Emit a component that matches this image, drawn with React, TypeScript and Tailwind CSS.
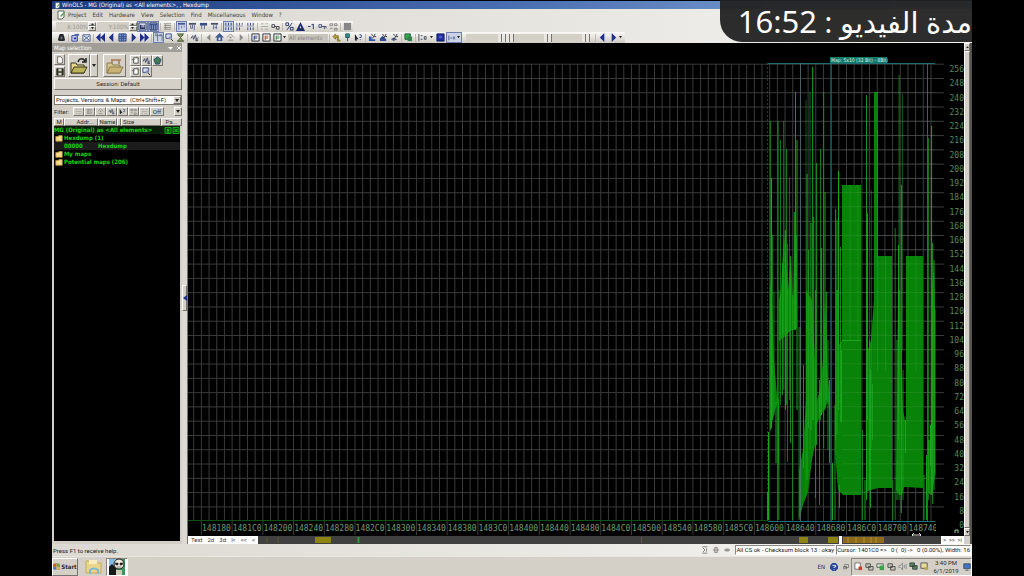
import React from 'react';
import clsx from 'clsx';

type Shape = { d: string; fill?: string; stroke?: string };

const NAVY = '#1c2f8c';
const INK = '#22262e';
const GREY = '#8d8b86';

const icons: Record<string, Shape[]> = {
    doc: [
        { d: 'M2 1h6v6l-2 2H2z', fill: '#fff', stroke: '#5a6a5a' },
        { d: 'M4 6l4-4 1 1-4 4z', fill: '#4f9a5a' },
    ],
    bear: [{ d: 'M3 1h4l1 3 1 4-2 1H3L1 8l1-4z', fill: INK }, { d: 'M4 4h2v3H4z', fill: '#777' }],
    windows: [
        { d: 'M1 3h6v6H1z', fill: '#dfe6f6', stroke: NAVY },
        { d: 'M4 1h5v2H4z', fill: '#4a63b4' },
        { d: 'M3 5h3v2H3z', fill: NAVY },
    ],
    windowX: [
        { d: 'M1 2h8v7H1z', fill: '#e8ecf4', stroke: '#46568a' },
        { d: 'M2 3l6 5M8 3L2 8', stroke: '#30508a' },
    ],
    rewind: [{ d: 'M5 0v10L0 5zM10 0v10L5 5z', fill: NAVY }],
    back: [{ d: 'M7 0v10L2 5z', fill: NAVY }],
    grid: [
        { d: 'M1 1h8v8H1z', fill: '#7f97cf', stroke: '#2a3d78' },
        { d: 'M1 4h8M1 6h8M4 1v8M6 1v8', stroke: '#33508f' },
    ],
    forward: [{ d: 'M3 0v10l5-5z', fill: NAVY }],
    fastForward: [{ d: 'M0 0v10l5-5zM5 0v10l5-5z', fill: NAVY }],
    columns: [{ d: 'M1 1h3v8M6 2h3v7M1 3h8', stroke: '#5d6d8b' }],
    search: [
        { d: 'M1 1h6v5H1z', fill: '#d8dff0', stroke: '#34467e' },
        { d: 'M5 5l4 4', stroke: INK },
        { d: 'M4 4h3v3H4z', fill: '#8896b8' },
    ],
    hourglass: [
        { d: 'M1 1h8M1 9h8', stroke: '#44612c' },
        { d: 'M2 2h6L5 5l3 4H2l3-4z', fill: '#98a860', stroke: '#48583a' },
    ],
    wave: [{ d: 'M1 6l2-3 1 4 2-5 1 5 2-2', stroke: '#39445f' }, { d: 'M6 7h3v2H6z', fill: '#525d78' }],
    backGrey: [{ d: 'M7 1v8L3 5z', fill: GREY }],
    forwardGrey: [{ d: 'M3 1v8l4-4z', fill: GREY }],
    roof: [{ d: 'M0 5l5-5 5 5-2 0v4H2V5z', fill: '#3f5990' }, { d: 'M4 5h2v3H4z', fill: '#e8ecf6' }],
    roofGrey: [{ d: 'M1 5l4-4 4 4M2 8h6', stroke: GREY }, { d: 'M4 4h2v2H4z', fill: GREY }],
    flagBlue: [{ d: 'M1 1h8v8H1z', fill: '#f4f4f4', stroke: INK }, { d: 'M3 3h4v1H4v1h3v1H4v2H3z', fill: NAVY }],
    flagRed: [{ d: 'M1 1h8v8H1z', fill: '#f4f4f4', stroke: INK }, { d: 'M3 3h4v1H4v1h3v1H4v2H3z', fill: '#a04a28' }],
    flagGreen: [{ d: 'M1 1h8v8H1z', fill: '#f4f4f4', stroke: INK }, { d: 'M3 3h4v1H4v1h3v1H4v2H3z', fill: '#2c8a38' }],
    undo: [{ d: 'M1 4l3-3v2h3v5h2v1H6V5H4v2z', fill: '#b49c34', stroke: '#8c7a2e' }],
    pin: [{ d: 'M3 1h4v4H3z', fill: '#2f9a94', stroke: '#1e4a5a' }, { d: 'M5 5v4', stroke: '#28405c' }],
    help: [{ d: 'M1 1l4 6H3v2L1 8z', fill: INK }, { d: 'M6 2h2v3H6M7 7v1', stroke: '#2d4b80' }],
    wand: [{ d: 'M1 4h3v3h4v2H1z', fill: '#2f56a8' }, { d: 'M4 1l1 2M8 1L5 6M9 4H7', stroke: INK }],
    wandFill: [{ d: 'M1 6l3-3 4 4v2H1z', fill: '#314f92' }, { d: 'M4 1l1 2M8 1L5 6M9 4H7', stroke: INK }],
    wandEye: [{ d: 'M1 7l3-2 4 2-4 2z', fill: '#4a5a80' }, { d: 'M4 1l1 2M8 1L5 6M9 4H7', stroke: INK }],
    layers: [{ d: 'M1 1h6v6H1z', fill: '#2fae4d', stroke: '#264f3c' }, { d: 'M4 4h5v5H4z', fill: '#32804a' }],
    number: [{ d: 'M1 1v8M3 3h2M3 7h2M7 4h2v3H7z', stroke: '#3f4a60' }],
    solid: [{ d: 'M1 1h8v8H1z', fill: '#1e2b9c', stroke: '#131c60' }, { d: 'M3 3h4v3H3z', fill: '#4657c8' }],
    bars: [{ d: 'M1 2v6M3 5h2M6 4h3M6 6h3', stroke: '#3a4c88' }],
    mapView: [{ d: 'M1 1h8v8H1z', fill: '#eef0f8', stroke: '#25335c' }, { d: 'M2 3h2v3h1V3h1v3h1V3h1v5H2z', fill: '#25335c' }],
    table: [{ d: 'M1 1h8v8H1z', fill: '#91a5d8', stroke: '#25335c' }, { d: 'M1 3h8M3 3v6M5 3v6M7 3v6', stroke: '#2d3d80' }],
    lines: [{ d: 'M1 2h8M1 4h8M1 6h8M1 8h8', stroke: GREY }, { d: 'M3 2v6', stroke: GREY }],
    bitA: [{ d: 'M1 1h8v2H1z', fill: '#4159a5' }, { d: 'M2 3v6M5 4v3M8 4v2', stroke: '#6e82b8' }],
    bitB: [{ d: 'M1 1h8v2H1z', fill: '#4a5267' }, { d: 'M3 3v4h2V3M7 3v6', stroke: '#56678f' }],
    bitC: [{ d: 'M1 1h8v3H1z', fill: '#3c4f85' }, { d: 'M3 4v4M6 4v4', stroke: '#56678f' }],
    bitD: [{ d: 'M1 1h8v2H1z', fill: '#4a5267' }, { d: 'M4 3v5M7 3v5M5 6h3', stroke: '#56678f' }],
    binA: [{ d: 'M2 1v3M5 1v3M8 1v3M2 6v3M5 6v3M8 6v3', stroke: '#2c4078' }, { d: 'M1 4h8v1H1z', fill: '#8796bb' }],
    binB: [{ d: 'M2 1v3M5 1v3M2 6v3M5 6v3M8 1v2', stroke: '#364a78' }, { d: 'M1 4h8v1H1z', fill: '#8796bb' }],
    dots: [{ d: 'M1 2h3M6 2h3M1 5h8M1 8h2M5 8h4', stroke: '#a8a59e' }],
    link: [{ d: 'M1 3h3v3H1zM6 5h3v3H6zM4 5h2', stroke: '#3d4049' }],
    percent: [{ d: 'M1 1h3v3H1zM6 6h3v3H6zM8 1L2 9', stroke: '#1f2f68' }],
    delta: [{ d: 'M5 0l5 10H0zM5 4L4 7h2z', fill: '#1d2d6c' }],
    minusOne: [{ d: 'M1 5h3M7 2v6M5 3h2', stroke: '#1f2f68' }],
    key: [{ d: 'M1 3h3v3H1zM4 5h5M7 5v3M9 5v2', stroke: '#3d4a6c' }],
    tree: [{ d: 'M1 2h3v2H1zM6 2h3v2H6zM1 7h3M6 7h3v2H6z', stroke: '#85827b' }],
    square: [{ d: 'M1 1h8v8H1z', fill: '#868686' }],
    page: [{ d: 'M2 1h4l2 2v6H2z', fill: '#fff', stroke: '#57544e' }],
    pageAdd: [{ d: 'M3 2h5v6H3z', fill: '#fff', stroke: '#4a4a4a' }, { d: 'M1 4h3M6 1l3 2', stroke: '#6a7060' }],
    disk: [{ d: 'M1 1h8v8H1z', fill: '#343a24', stroke: '#1a1a1a' }, { d: 'M3 1h4v3H3zM3 6h4v3H3z', fill: '#d0d0c4' }],
    gem: [{ d: 'M5 1l4 3-2 5H3L1 4z', fill: '#3d7b50', stroke: '#284570' }],
    folder: [{ d: 'M1 3h3l1-1h4v7H1z', fill: '#f4dc8c', stroke: '#c39c3a' }],
    net: [{ d: 'M1 1h5v4H1zM4 4h5v4H4z', fill: '#4f8a50', stroke: '#3c4450' }],
    pcs: [{ d: 'M1 2h5v4H1zM4 5h5v4H4z', fill: '#c5c3b8', stroke: '#4e4c48' }],
    alert: [{ d: 'M1 1h6v7H1z', fill: '#fff', stroke: '#706b66' }, { d: 'M5 5h4v4H5z', fill: '#c04430' }],
    speaker: [{ d: 'M1 4h2l2-3v8L3 6H1zM7 3v4M9 2v6', fill: '#d9d9d9', stroke: '#8b8b8b' }],
    safe: [{ d: 'M1 2h7v4H1z', fill: '#d8dcd8', stroke: '#5a645c' }, { d: 'M4 4h5v5H4z', fill: '#3ca24a' }],
    note: [{ d: 'M1 1h7v6H1z', fill: '#e8dc98', stroke: '#555' }, { d: 'M5 6h4v3H5z', fill: '#b8a850' }],
    helpBall: [{ d: 'M3 0h4l3 3v4L7 10H3L0 7V3z', fill: '#28489c' }, { d: 'M3 3h4v2H5v1M5 8v1', stroke: '#fff' }],
    restore: [{ d: 'M3 1h6v5H3zM1 4h5v4H1z', fill: '#e8e6e0', stroke: '#444' }],
    monitor: [{ d: 'M1 1h8v6H1zM3 9h4', fill: '#4472c0', stroke: '#345' }],
    gear: [{ d: 'M3 2h4v6H3zM1 5h8M5 1v8', stroke: '#8b8984' }],
    sigma: [{ d: 'M2 1h6M2 9h6M2 2l3 3-3 3M7 3v4', stroke: '#6d6b66' }],
    eye: [{ d: 'M1 5l3-2h3l2 2-2 2H4z', fill: '#989690' }],
};

const Icon: React.FC<{ name: string; className?: string }> = ({ name, className = 'size-[9px]' }) => (
    <svg viewBox="0 0 10 10" className={clsx('shrink-0', className)} aria-hidden="true">
        {icons[name].map((s, i) => (
            <path key={i} d={s.d} fill={s.fill ?? 'none'} stroke={s.stroke} strokeWidth={1} />
        ))}
    </svg>
);

const Caret: React.FC<{ className?: string }> = ({ className = 'w-1' }) => (
    <svg viewBox="0 0 4 3" className={clsx('shrink-0', className)} aria-hidden="true">
        <path d="M0 0h4L2 3z" fill="#222" />
    </svg>
);

const raised = 'border border-t-white border-l-white border-r-[#77746d] border-b-[#77746d] bg-[#d4d0c8]';
const sunken = 'border border-t-[#8a877f] border-l-[#8a877f] border-r-white border-b-white';

// '|' is a separator, a leading '!' marks a pressed button
const ToolGroup: React.FC<{ items: string[] }> = ({ items }) => (
    <>
        {items.map((item, i) => {
            if (item === '|') {
                return <span key={i} className="mx-px h-2 w-px shrink-0 bg-[#bdb9b1]" />;
            }
            const pressed = item.startsWith('!');
            const name = pressed ? item.slice(1) : item;
            return (
                <button
                    key={i}
                    aria-label={name}
                    className={clsx(
                        'flex h-[11px] w-[11px] shrink-0 items-center justify-center',
                        pressed && 'border border-[#6e7fae] bg-[#ccd3e4]'
                    )}
                >
                    <Icon name={name} className="size-[9px]" />
                </button>
            );
        })}
    </>
);

const ZoomField: React.FC<{ label: string }> = ({ label }) => (
    <div className="flex h-[9px] w-10 shrink-0 items-center">
        <input
            aria-label={`${label} zoom`}
            disabled
            defaultValue={`${label}:100%`}
            className="h-[9px] w-8 bg-[#d4d0c8] text-right text-[#96938c]"
        />
        <span className="flex h-[9px] w-2 flex-col">
            <button aria-label={`${label} up`} className={clsx(raised, 'flex h-1 items-center justify-center')}>
                <Caret className="w-[3px] rotate-180" />
            </button>
            <button aria-label={`${label} down`} className={clsx(raised, 'flex h-[5px] items-center justify-center')}>
                <Caret className="w-[3px]" />
            </button>
        </span>
    </div>
);

const menus = ['Project', 'Edit', 'Hardware', 'View', 'Selection', 'Find', 'Miscellaneous', 'Window', '?'];

const Toolbars: React.FC = () => (
    <div className="bg-linear-to-r from-[#d9d6cf] to-[#f4f3f0]">
        <nav className="flex h-3 items-center pl-1">
            <Icon name="doc" className="mr-[2px] size-[10px]" />
            {menus.map(menu => (
                <button key={menu} className="mr-[6px] leading-[10px] text-[#3c3a36]">{menu}</button>
            ))}
        </nav>
        <div className="flex h-[11px] w-[301px] items-center bg-linear-to-b from-[#fbfaf8] to-[#d0ccc4] pl-1">
            <ZoomField label="X" />
            <span className="w-[2px]" />
            <ZoomField label="Y" />
            <span className="w-[2px]" />
            <ToolGroup items={['!mapView', '!table', '|', 'lines', '|', '!bitA', 'bitB', 'bitC', 'bitD', '|', '!binA', 'binB', 'binA', '|', 'dots', 'link', '|', 'percent', 'delta', 'minusOne', 'key', 'tree', '|', 'square']} />
        </div>
        <div className="flex h-[11px] w-[573px] items-center bg-linear-to-b from-[#fbfaf8] to-[#d0ccc4] pl-1">
            <ToolGroup items={['bear', '|', 'windows', 'windowX', '|', 'rewind', 'back', 'grid', 'forward', 'fastForward', '|', '!columns', 'search', 'hourglass', '|', 'wave', '|', 'backGrey', 'roof', 'roofGrey', 'forwardGrey', '|', 'flagBlue', 'flagRed', 'flagGreen']} />
            <Caret className="mr-[2px] w-[3px]" />
            <input
                aria-label="Filter elements"
                disabled
                defaultValue="All elements"
                className="h-2 w-10 shrink-0 bg-[#c8c5bd] pl-px text-[#85827c]"
            />
            <ToolGroup items={['|', 'undo', 'pin', 'help', '|', 'wand', 'wandFill', 'wandEye', '|', 'layers', '|', 'number']} />
            <Caret className="mx-[2px] w-[3px]" />
            <ToolGroup items={['solid']} />
            <button aria-label="Bars" className="flex h-[11px] w-4 shrink-0 items-center justify-between border border-[#6e7fae] bg-[#ccd3e4] px-px">
                <Icon name="bars" className="size-2" />
                <Caret className="w-[3px]" />
            </button>
            <span className="w-1" />
            <input
                type="range"
                aria-label="Zoom"
                defaultValue={100}
                className="h-2 w-12 shrink-0 appearance-none bg-[#d4d0c8] [&::-webkit-slider-thumb]:h-2 [&::-webkit-slider-thumb]:w-4 [&::-webkit-slider-thumb]:appearance-none [&::-webkit-slider-thumb]:bg-[repeating-linear-gradient(90deg,#e8e6e0_0_3px,#77746e_3px_4px)]"
            />
            {['Height', 'Offset'].map(name => (
                <input
                    key={name}
                    type="range"
                    aria-label={name}
                    defaultValue={100}
                    className="h-2 w-[38px] shrink-0 appearance-none bg-[#d4d0c8] [&::-webkit-slider-thumb]:h-2 [&::-webkit-slider-thumb]:w-2 [&::-webkit-slider-thumb]:appearance-none [&::-webkit-slider-thumb]:bg-[repeating-linear-gradient(90deg,#e8e6e0_0_3px,#77746e_3px_4px)]"
                />
            ))}
            <span className="w-1" />
            <ToolGroup items={['|', 'back', 'forward']} />
            <Caret className="w-[3px]" />
        </div>
    </div>
);

const tree = [
    { label: 'Hexdump (1)', folder: true },
    { label: 'Hexdump', address: '00000' },
    { label: 'My maps', folder: true },
    { label: 'Potential maps (206)', folder: true },
];

const OpenFolder: React.FC<{ muted?: boolean }> = ({ muted }) => (
    <svg viewBox="0 0 18 18" className="size-[18px]" aria-hidden="true">
        <path d="M1 6h5l1 2h7v8H1z" fill={muted ? '#d5c48b' : '#e6d98a'} stroke={muted ? '#8a7a50' : '#39361f'} />
        <path d="M1 16l3-6h13l-3 6z" fill={muted ? '#c9b273' : '#bdb35a'} stroke={muted ? '#8a7a50' : '#39361f'} />
        <path d={muted ? 'M6 6V3h7v4M5 3h10' : 'M8 5c1-4 5-4 7-1M16 1v4h-4'} fill="none" stroke={muted ? '#a97a50' : '#222'} strokeWidth="1.5" />
    </svg>
);

const MapPanel: React.FC = () => (
    <aside className="flex w-[136px] shrink-0 bg-[#d4d0c8] font-[Roboto,sans-serif]">
        <div className="flex w-[130px] flex-col">
            <header className="flex h-[9px] w-[134px] items-center bg-[#a19e98] pl-[2px] pr-1 font-['DejaVu_Sans_Condensed','DejaVu_Sans',sans-serif] text-white">
                <h2 className="flex-1 leading-[9px]">Map selection</h2>
                <svg viewBox="0 0 14 6" className="h-[6px] w-[14px]" aria-hidden="true">
                    <path d="M0 2h5L2.500 5z" fill="#fff" />
                    <path d="M9 1l4 4M13 1L9 5" stroke="#fff" />
                </svg>
            </header>
            <div className="flex h-[26px] items-center pl-[2px] pt-px">
                <div className="flex flex-col gap-px">
                    <button aria-label="New" className={clsx(raised, 'flex size-[11px] items-center justify-center')}><Icon name="page" className="size-2" /></button>
                    <button aria-label="Save" className={clsx(raised, 'flex size-[11px] items-center justify-center')}><Icon name="disk" className="size-2" /></button>
                </div>
                <button aria-label="Open" className={clsx(raised, 'ml-[3px] flex h-[23px] w-[22px] items-center justify-center')}><OpenFolder /></button>
                <button aria-label="Open menu" className={clsx(raised, 'flex h-[23px] w-2 items-center justify-center')}><Caret /></button>
                <button aria-label="Import" className={clsx(raised, 'ml-[5px] flex size-[23px] items-center justify-center')}><OpenFolder muted /></button>
                <div className="ml-1 grid grid-cols-3">
                    {['pageAdd', 'wave', 'gem', 'pageAdd', 'search'].map((name, i) => (
                        <button key={i} aria-label={name} className={clsx(raised, 'flex size-[11px] items-center justify-center')}><Icon name={name} className="size-[9px]" /></button>
                    ))}
                </div>
            </div>
            <button className={clsx(raised, 'ml-[2px] h-3 leading-[10px]')}>Session: Default</button>
            <div className="relative ml-[2px] mt-[5px] flex">
                <select
                    aria-label="Search"
                    className="h-[10px] flex-1 appearance-none border border-[#77746d] bg-white px-px leading-[8px] text-[#222]"
                >
                    <option>Projects, Versions &amp; Maps:&nbsp; (Ctrl+Shift+F)</option>
                </select>
                <span className={clsx(raised, 'pointer-events-none absolute right-px top-px flex size-2 items-center justify-center')}>
                    <Caret />
                </span>
            </div>
            <div className="mt-[2px] flex h-[9px] items-center pl-[2px]">
                <span className="w-[19px]">Filter:</span>
                {['dots', 'lines', 'roofGrey', 'wave', 'help', 'tree', 'dots'].map((name, i) => (
                    <button key={i} aria-label={`Filter ${name}`} className={clsx(raised, 'flex h-[9px] w-[11px] items-center justify-center')}><Icon name={name} className="size-[7px]" /></button>
                ))}
                <button className={clsx(raised, 'h-[9px] w-[14px] leading-[7px]')}>Off</button>
                <button aria-label="More filters" className={clsx(raised, 'ml-auto flex h-[9px] w-2 items-center justify-center')}><Caret /></button>
            </div>
            <div className="ml-[2px] mt-[2px] flex h-2 text-center leading-[6px]">
                <span className={clsx(raised, 'w-[10px]')}>M</span>
                <span className={clsx(raised, 'w-[34px] pl-2')}>Addr...</span>
                <span className={clsx(raised, 'w-[19px]')}>Name</span>
                <span className={clsx(raised, 'w-1')} />
                <span className={clsx(raised, 'w-10 pl-px text-left')}>Size</span>
                <span className={clsx(raised, 'flex-1')}>Pa...</span>
            </div>
            <div className="mb-[3px] ml-[2px] mr-[2px] flex-1 bg-black font-['DejaVu_Sans_Condensed','DejaVu_Sans',sans-serif] font-bold text-[#16d416]">
                <div className="flex h-2 items-center bg-[#0a1d0a]">
                    <span className="flex-1 whitespace-nowrap leading-[8px]">MG (Original) as &lt;All elements&gt;</span>
                    <svg viewBox="0 0 16 7" className="h-[7px] w-4" aria-hidden="true">
                        <path d="M1 .5h6v6H1zM9 .5h6v6H9z" fill="#094a09" stroke="#16a416" />
                        <path d="M3 3h2M4 2v4M10.500 2l3 3M13.500 2l-3 3" stroke="#16d416" />
                    </svg>
                </div>
                <ul>
                    {tree.map(node => (
                        <li key={node.label} className={clsx('flex h-2 items-center whitespace-nowrap leading-[8px]', node.address && 'bg-[#1c1c1c]')}>
                            {node.folder && <Icon name="folder" className="ml-px mr-px size-[8px]" />}
                            {node.address && <span className="ml-[10px] w-[34px]">{node.address}</span>}
                            {node.label}
                        </li>
                    ))}
                </ul>
            </div>
        </div>
        <div className="ml-auto flex w-[6px] flex-col justify-center border-r border-[#77746d] bg-[#dddad3] pt-2">
            <button aria-label="Collapse panel" className={clsx(raised, 'flex h-[26px] items-center justify-center')}>
                <svg viewBox="0 0 4 6" className="w-1 shrink-0"><path d="M4 0v6L0 3z" fill={NAVY} /></svg>
            </button>
        </div>
    </aside>
);

const scaleLabels = Array.from({ length: 33 }, (_, i) => 256 - i * 8);
const addressLabels = [
    '148180', '1481C0', '148200', '148240', '148280', '1482C0', '148300', '148340', '148380', '1483C0', '148400', '148440',
    '148480', '1484C0', '148500', '148540', '148580', '1485C0', '148600', '148640', '148680', '1486C0', '148700', '148740',
];

// filled areas of the signal
const areas = [
    '769,348 770,432 775,410 778,402 778,462 779,470 779,400 777,395 774,360 772,300 770,280',
    '779,300 779,341 784,337 789,332 797,328 797,235 795,235 793,300 791,254 788,290 784,230 781,290',
    '799,520 803,505 808,492 812,460 816,440 816,380 812,300 806,290 806,400 803,450 799,470',
    '816,425 820,417 824,410 828,402 829,408 830,398 828,380 825,290 823,360 820,390 817,400',
    '835,450 837,478 838,490 841,493 843,495 861,495 861,185 842,185 842,340 839,345 838,290 836,290',
    '866,492 871,490 878,488 892,488 892,256 878,256 878,92 874,92 874,300 871,340 868,350 867,300',
    '896,490 899,495 902,495 904,487 923,488 923,256 906,256 906,425 903,410 900,290 898,290 897,400',
    '927,485 929,494 932,495 935,475 935,310 934,260 932,290 931,440 928,440',
];

// x, top, bottom, opacity
const strokes: [number, number, number, number][] = [
    [767.5, 492, 520, 1], [768.5, 432, 520, 1], [770.3, 121, 430, 0.8], [771.5, 178, 428, 1], [772.7, 235, 420, 0.8], [774, 292, 415, 0.7],
    [776, 402, 463, 1], [778, 121, 520, 0.9], [779, 290, 520, 0.6], [780.5, 140, 405, 0.7], [782.5, 263, 395, 0.8], [783.7, 121, 390, 0.7],
    [785.5, 230, 410, 0.9], [786.6, 149, 405, 0.8], [787.5, 244, 462, 0.7], [789.5, 178, 400, 0.6], [790.5, 256, 443, 0.8], [792.7, 295, 520, 0.8],
    [794.3, 212, 330, 1], [795.5, 92, 330, 0.9], [797, 140, 410, 1], [799, 327, 520, 0.7], [800.2, 327, 510, 0.7],
    [803.5, 365, 468, 0.9], [806, 100, 495, 0.5], [807, 174, 480, 1], [808.5, 250, 428, 0.8], [810, 92, 450, 0.6], [811, 223, 430, 1],
    [812.7, 67, 420, 1], [813.7, 217, 420, 0.9], [815.5, 290, 498, 0.8], [816.6, 163, 445, 0.9], [819.5, 380, 505, 0.8], [820.6, 149, 420, 0.8],
    [821.6, 248, 415, 1], [823.7, 92, 448, 0.8], [825, 192, 410, 0.9], [826.4, 292, 400, 0.9], [828, 340, 450, 0.8], [829.5, 380, 463, 0.9],
    [832.5, 463, 520, 1], [835, 405, 520, 0.9], [835.7, 209, 440, 1], [837, 220, 435, 0.9], [838.5, 171, 410, 1], [839.5, 485, 508, 0.9],
    [840.5, 247, 422, 0.8], [841.5, 350, 422, 1], [862.5, 430, 520, 0.7], [865, 480, 520, 1], [866.5, 95, 500, 0.9], [867.5, 213, 420, 0.9],
    [869.5, 340, 490, 0.8], [870.5, 370, 508, 0.9], [871.3, 190, 448, 0.5], [872.5, 384, 440, 0.8], [892.8, 480, 520, 0.7], [895.2, 228, 520, 0.7],
    [897, 340, 500, 0.9], [898.5, 245, 440, 0.9], [899.1, 75, 500, 0.7], [901.3, 185, 513, 1], [902.3, 94, 350, 0.6], [903, 370, 500, 0.7],
    [905.5, 420, 453, 1], [924, 475, 520, 0.9], [926.5, 455, 520, 0.9], [928.7, 138, 500, 0.8], [930.5, 425, 466, 1], [931.6, 126, 495, 1],
    [932.7, 243, 504, 0.9], [934, 260, 490, 0.9], [935, 310, 475, 0.8],
    [850, 185, 340, 0.5], [858, 185, 340, 0.5], [877.5, 130, 371, 0.5], [885.5, 256, 371, 0.5], [908, 256, 371, 0.5], [916, 256, 371, 0.5],
];

const Waveform: React.FC = () => (
    <svg viewBox="188 43 776 493" className="block w-full" fontFamily="'DejaVu Sans Mono', monospace" fontSize="8">
        <rect x="188" y="43" width="776" height="493" fill="#000" />
        <g stroke="#3b3b3b">
            {Array.from({ length: 97 }, (_, i) => (
                <path key={i} d={`M${193.7 + i * 7.68} 64V521`} />
            ))}
            {Array.from({ length: 32 }, (_, i) => (
                <path key={i} d={`M188 ${64.2 + i * 14.28}H944`} />
            ))}
            {addressLabels.map((label, i) => (
                <path key={label} d={`M${201.4 + i * 30.72} 521V535`} />
            ))}
        </g>
        <path d="M188 520.5H768" stroke="#0d5214" />
        <g fill="#098209">
            {areas.map(points => <polygon key={points} points={points} />)}
        </g>
        <g stroke="#1ba51f" strokeWidth="1">
            {strokes.map(([x, top, bottom, opacity]) => (
                <path key={x} d={`M${x} ${top}V${bottom}`} strokeOpacity={opacity} />
            ))}
            <path d="M842 340.5H861" />
        </g>
        <g stroke="#fff" strokeOpacity=".08">
            {Array.from({ length: 29 }, (_, i) => (
                <path key={i} d={`M842 ${92.5 + i * 14.28}H935`} />
            ))}
        </g>
        <g stroke="#1c6e74" fill="none">
            <path d="M768 63.5H935M768 521.5H935" />
            <path d="M767.5 63V521" strokeDasharray="2 2" strokeOpacity=".6" />
            <path d="M800.5 63V521" stroke="#55707c" strokeOpacity=".7" />
            <path d="M831 63V521" />
            <path d="M927.5 63V521" />
        </g>
        <rect x="830" y="57" width="57" height="6" fill="#14786c" />
        <text x="831" y="62" fill="#d8f0ec" fontFamily="'DejaVu Sans Condensed', sans-serif" fontSize="5">Map: 5x10 (32 Bit) - 8Bit)</text>
        <g fill="#578a5c" textAnchor="end">
            {scaleLabels.map((label, i) => (
                <text key={label} x="964" y={72 + i * 14.25}>{label}</text>
            ))}
        </g>
        <g fill="#729a75">
            {addressLabels.map((label, i) => (
                <text key={label} x={202 + i * 30.72} y="531">{label}</text>
            ))}
        </g>
        <rect x="936" y="522" width="12" height="13" fill="#000" />
        <path d="M912 535h9M914 533l-2 2 2 2M919 533l2 2-2 2" stroke="#ddd" fill="none" />
        <path d="M955 533v-3h3v3" stroke="#9c9" fill="none" />
    </svg>
);

const ChartTabs: React.FC = () => (
    <div className="flex h-2 items-center bg-[#404040] font-[Roboto,sans-serif] leading-[8px] text-[#333]">
        <div className="flex h-2 w-[70px] items-center justify-between bg-white px-[3px]">
            {['Text', '2d', '3d', '|<', '<<', '<'].map(tab => <button key={tab}>{tab}</button>)}
        </div>
        <svg viewBox="0 0 683 8" preserveAspectRatio="none" className="h-2 min-w-0 flex-1" aria-hidden="true">
            <path d="M57 1h16v6H57zM541 1h9v6h-9zM570 1h10v6h-10z" fill="#8c8312" />
            <path d="M585 1h41v6h-41z" fill="#8e6a1c" />
            <path d="M590 1v6M598 1v6M606 1v6M613 1v6M618 1v6" stroke="#a89a1e" />
            <path d="M100.5 1v6" stroke="#2e9a3a" strokeWidth="2" />
            <path d="M383.5 1v6M9 1v6M20 1v6" stroke="#5d5a22" />
            <path d="M581 0h3v8h-3z" fill="#fff" />
        </svg>
        <div className="flex h-2 w-[23px] items-center justify-between bg-white px-[2px]">
            {['>', '>>', '>|'].map(tab => <button key={tab}>{tab}</button>)}
        </div>
    </div>
);

const StatusBar: React.FC = () => (
    <footer className="flex h-3 items-center bg-linear-to-r from-[#dcd9d2] to-[#f6f5f3] pl-px pr-px font-[Roboto,sans-serif] leading-[9px] text-[#222]">
        <span className="flex-1">Press F1 to receive help.</span>
        <span className="mr-1 flex gap-[3px]">
            <Icon name="sigma" className="size-2" />
            <Icon name="gear" className="size-2" />
            <Icon name="eye" className="size-2" />
        </span>
        <span className={clsx(sunken, 'mr-px h-[10px] whitespace-nowrap bg-[#fbfbfa] leading-[8px]')}>All CS ok - Checksum block 13 : okay</span>
        <span className={clsx(sunken, 'h-[10px] whitespace-pre bg-[#fbfbfa] leading-[8px]')}>{'Cursor: 1401C0 =>   0 (  0) ->   0 (0.00%), Width: 16'}</span>
    </footer>
);

const Taskbar: React.FC = () => (
    <div className="flex h-5 items-center border-t border-[#e8e6e1] bg-[#d4d0c8]">
        <button className={clsx(raised, 'flex h-[18px] w-[26px] items-center justify-center font-bold')}>
            <svg viewBox="0 0 8 8" className="mr-px size-[7px] shrink-0" aria-hidden="true">
                <path d="M0 1l4-1v4L0 5z" fill="#c8642c" />
                <path d="M4 0l4 1v4L4 4z" fill="#7ba43c" />
                <path d="M0 5l4-1v4L0 7z" fill="#4b78c0" />
                <path d="M4 4l4 1v3L4 8z" fill="#d8b43c" />
            </svg>
            Start
        </button>
        <button aria-label="Explorer" className="ml-1 flex h-[18px] w-6 items-center justify-center">
            <svg viewBox="0 0 18 16" className="h-4 w-[18px]" aria-hidden="true">
                <path d="M1 2h5l1 2h9v10H1z" fill="#e9d68c" stroke="#c2a95a" />
                <path d="M4 1h8v4H4z" fill="#f7edbd" />
                <path d="M5 15v-4q4-3 8 0v4" fill="none" stroke="#7ab8d8" strokeWidth="2" />
            </svg>
        </button>
        <button aria-label="WinOLS" className={clsx(sunken, 'flex h-[18px] w-[22px] items-center justify-center bg-white')}>
            <svg viewBox="0 0 18 17" className="h-[17px] w-[18px]" aria-hidden="true">
                <rect x="1" y="1" width="16" height="16" fill="#3f9160" />
                <path d="M1 1h7v7H1z" fill="#82bce0" />
                <path d="M1 17V9l3-3 4 4v7z" fill="#151a18" />
                <circle cx="11" cy="6" r="5" fill="#eee9df" stroke="#222" />
                <path d="M7 5h3v2H8zM12 5h3l-1 2h-2zM9 9h4" fill="#222" stroke="#222" strokeWidth=".5" />
                <path d="M8 17v-5h6v5z" fill="#cfcfb8" />
            </svg>
        </button>
        <div className="ml-auto flex items-center gap-[5px]">
            <span>EN</span>
            <Icon name="helpBall" className="size-2" />
            <Icon name="restore" className="size-[6px]" />
        </div>
        <div className={clsx(sunken, 'ml-[2px] flex h-[18px] w-[121px] items-center gap-[2px] pl-[2px] font-[Roboto,sans-serif]')}>
            {['alert', 'pcs', 'safe', 'pcs', 'speaker', 'net', 'note'].map((name, i) => (
                <Icon key={i} name={name} className="size-[9px]" />
            ))}
            <time className="flex-1 whitespace-nowrap text-center leading-[8px]">3:40 PM<br />6/1/2019</time>
            <Icon name="monitor" className="size-2" />
        </div>
    </div>
);

const App: React.FC = () => (
    <div className="min-h-screen bg-black px-[52px] font-['DejaVu_Sans_Condensed','DejaVu_Sans',sans-serif] text-[6px] leading-[8px] text-[#2e2c28]">
        <div className="relative flex min-h-screen flex-col overflow-hidden">
            <header className="flex h-[9px] items-center border-t border-black bg-linear-to-r from-[#1c3c80] via-[#4a6fb0] to-[#8fb0dc] pl-[2px] text-white">
                <Icon name="doc" className="mr-px size-[7px]" />
                <h1 className="font-medium leading-[8px]">WinOLS - MG (Original) as &lt;All elements&gt;, , Hexdump</h1>
            </header>
            <Toolbars />
            <main className="flex flex-1">
                <MapPanel />
                <section className="min-w-0 flex-1 bg-black">
                    <Waveform />
                    <ChartTabs />
                </section>
                <div className="flex w-2 shrink-0 flex-col border-r-2 border-[#55534f] bg-[#d4d0c8]">
                    <button aria-label="Scroll up" className={clsx(raised, 'flex h-2 items-center justify-center')}><Caret className="w-[3px] rotate-180" /></button>
                    <div className={clsx(raised, 'flex-1')} />
                    <button aria-label="Scroll down" className={clsx(raised, 'mb-2 flex h-2 items-center justify-center')}><Caret className="w-[3px]" /></button>
                </div>
            </main>
            <StatusBar />
            <Taskbar />
            <div
                dir="rtl"
                className="absolute right-0 top-0 h-[42px] w-[252px] overflow-hidden whitespace-nowrap rounded-bl-[22px] bg-[#222222]/95 font-['Noto_Sans','DejaVu_Sans',sans-serif] text-[29px] leading-[42px] text-white"
            >
                مدة الفيديو : <span className="text-[31px]">16:52</span>
            </div>
        </div>
    </div>
);

export default App;
